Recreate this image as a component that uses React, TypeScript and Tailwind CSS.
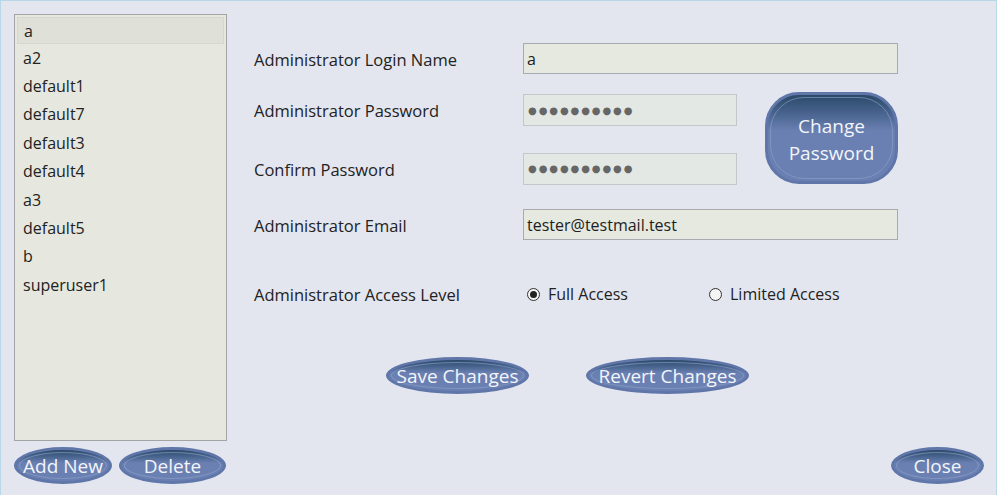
import type { ReactNode } from "react";

const users = [
  "a",
  "a2",
  "default1",
  "default7",
  "default3",
  "default4",
  "a3",
  "default5",
  "b",
  "superuser1",
];

function PillButton({
  children,
  className = "",
  round = "rounded-[50%]",
}: {
  children: ReactNode;
  className?: string;
  round?: string;
}) {
  return (
    <button
      className={`relative flex items-center justify-center ${round} border-[3px] border-[#6076a9] bg-[linear-gradient(to_bottom,#2a4a68_0%,#46628c_20%,#6a80b2_42%,#6a80b2_100%)] text-[19px] leading-[26px] text-[#f3f5fa] ${className}`}
    >
      <span
        className={`pointer-events-none absolute inset-[2px] ${round} border border-[#8fa2c8]/60`}
      />
      <span className="relative">{children}</span>
    </button>
  );
}

function Radio({ checked, label }: { checked?: boolean; label: string }) {
  return (
    <label className="flex items-center gap-[8px] text-[16px] text-[#222]">
      <span className="flex h-[13px] w-[13px] items-center justify-center rounded-full border border-[#333] bg-[#f4f4f4]">
        {checked && <span className="h-[7px] w-[7px] rounded-full bg-[#222]" />}
      </span>
      {label}
    </label>
  );
}

function Field({ value, w }: { value: string; w: string }) {
  return (
    <div
      className={`${w} flex h-[31px] items-center border border-[#a7aaae] bg-[#e6e9e0] pl-[3px] text-[16px] text-[#1e1e1e]`}
    >
      {value}
    </div>
  );
}

function Password() {
  return (
    <div className="flex h-[32px] w-[214px] items-center border border-[#c4c7ca] bg-[#e4e8e4] pl-[4px] font-['DejaVu_Sans',sans-serif] text-[10px] tracking-[1.9px] text-[#666]">
      ●●●●●●●●●●
    </div>
  );
}

export default function App() {
  return (
    <div className="flex h-[495px] w-[997px] border-x border-t border-[#b6d8e9] bg-[#e3e6ef] font-['Open_Sans',sans-serif]">
      {/* left list */}
      <div className="ml-[13px] mt-[13px] flex w-[213px] flex-col">
        <div className="h-[427px] border border-[#a2a4a6] bg-[#e6e8df] px-[2px] pt-[2px]">
          {users.map((u, i) => (
            <div
              key={u}
              className={`flex items-center pl-[6px] text-[16px] text-[#222] ${
                i === 0
                  ? "h-[27px] border border-[#d5d8cf] bg-[#dfe1d8]"
                  : "h-[28.4px] pb-[1px]"
              }`}
            >
              {u}
            </div>
          ))}
        </div>
        <div className="mt-[6px] flex gap-[7px]">
          <PillButton className="h-[37px] w-[98px]">Add New</PillButton>
          <PillButton className="h-[37px] w-[107px]">Delete</PillButton>
        </div>
      </div>

      {/* form */}
      <div className="ml-[27px] flex flex-1 flex-col">
        <div className="mt-[42px] flex h-[31px] items-center">
          <div className="w-[269px] pt-[4px] text-[16.5px] text-[#222]">
            Administrator Login Name
          </div>
          <Field value="a" w="w-[375px]" />
        </div>

        <div className="mt-[18px] flex">
          <div className="flex w-[483px] flex-col">
            <div className="mt-[2px] flex h-[32px] items-center">
              <div className="w-[269px] pt-[2px] text-[16.5px] text-[#222]">
                Administrator Password
              </div>
              <Password />
            </div>
            <div className="mt-[27px] flex h-[31px] items-center">
              <div className="w-[269px] pt-[3px] text-[16.5px] text-[#222]">
                Confirm Password
              </div>
              <Password />
            </div>
          </div>
          <PillButton
            round="rounded-[34px]"
            className="ml-[28px] h-[92px] w-[133px] flex-col pt-[4px] leading-[27px]"
          >
            Change
            <br />
            Password
          </PillButton>
        </div>

        <div className="mt-[25px] flex h-[31px] items-center">
          <div className="w-[269px] pt-[3px] text-[16.5px] text-[#222]">
            Administrator Email
          </div>
          <Field value="tester@testmail.test" w="w-[375px]" />
        </div>

        <div className="mt-[42px] flex h-[24px] items-center">
          <div className="w-[273px] pt-[2px] text-[16.5px] text-[#222]">
            Administrator Access Level
          </div>
          <div className="w-[182px]">
            <Radio checked label="Full Access" />
          </div>
          <Radio label="Limited Access" />
        </div>

        <div className="mt-[51px] flex gap-[57px] pl-[132px]">
          <PillButton className="h-[37px] w-[143px]">Save Changes</PillButton>
          <PillButton className="h-[37px] w-[163px]">Revert Changes</PillButton>
        </div>

        <div className="mb-[11px] mr-[12px] mt-auto flex justify-end">
          <PillButton className="h-[37px] w-[93px]">Close</PillButton>
        </div>
      </div>
    </div>
  );
}
